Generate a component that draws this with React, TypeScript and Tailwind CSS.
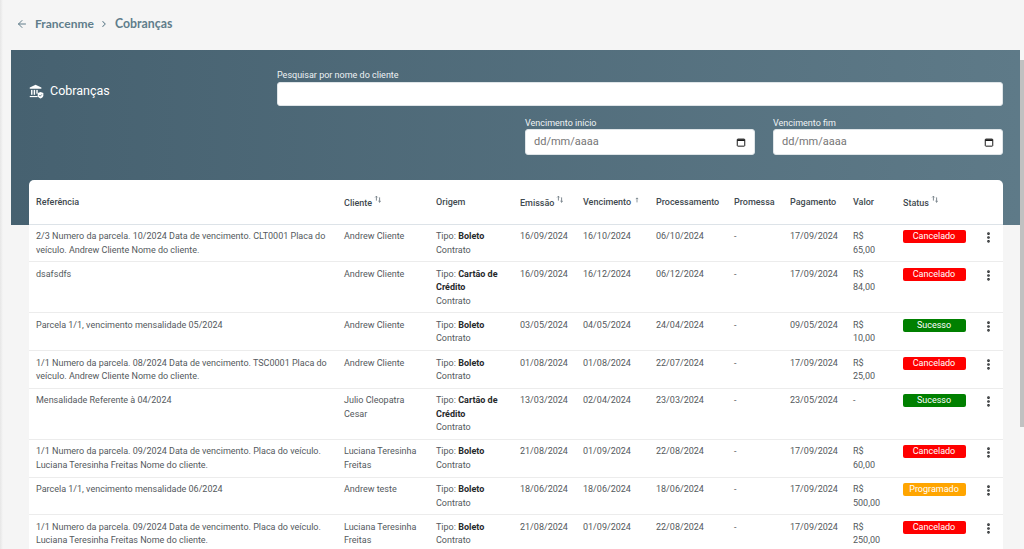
import React from 'react';
import { ArrowLeft, ChevronRight, MoreVertical } from 'lucide-react';

type Row = {
  ref: string;
  cliente: string;
  tipo: string;
  emissao: string;
  vencimento: string;
  processamento: string;
  pagamento: string;
  valor: string;
  status: 'Cancelado' | 'Sucesso' | 'Programado';
};

const rows: Row[] = [
  { ref: '2/3 Numero da parcela. 10/2024 Data de vencimento. CLT0001 Placa do veículo. Andrew Cliente Nome do cliente.', cliente: 'Andrew Cliente', tipo: 'Boleto', emissao: '16/09/2024', vencimento: '16/10/2024', processamento: '06/10/2024', pagamento: '17/09/2024', valor: 'R$ 65,00', status: 'Cancelado' },
  { ref: 'dsafsdfs', cliente: 'Andrew Cliente', tipo: 'Cartão de Crédito', emissao: '16/09/2024', vencimento: '16/12/2024', processamento: '06/12/2024', pagamento: '17/09/2024', valor: 'R$ 84,00', status: 'Cancelado' },
  { ref: 'Parcela 1/1, vencimento mensalidade 05/2024', cliente: 'Andrew Cliente', tipo: 'Boleto', emissao: '03/05/2024', vencimento: '04/05/2024', processamento: '24/04/2024', pagamento: '09/05/2024', valor: 'R$ 10,00', status: 'Sucesso' },
  { ref: '1/1 Numero da parcela. 08/2024 Data de vencimento. TSC0001 Placa do veículo. Andrew Cliente Nome do cliente.', cliente: 'Andrew Cliente', tipo: 'Boleto', emissao: '01/08/2024', vencimento: '01/08/2024', processamento: '22/07/2024', pagamento: '17/09/2024', valor: 'R$ 25,00', status: 'Cancelado' },
  { ref: 'Mensalidade Referente à 04/2024', cliente: 'Julio Cleopatra Cesar', tipo: 'Cartão de Crédito', emissao: '13/03/2024', vencimento: '02/04/2024', processamento: '23/03/2024', pagamento: '23/05/2024', valor: '-', status: 'Sucesso' },
  { ref: '1/1 Numero da parcela. 09/2024 Data de vencimento. Placa do veículo. Luciana Teresinha Freitas Nome do cliente.', cliente: 'Luciana Teresinha Freitas', tipo: 'Boleto', emissao: '21/08/2024', vencimento: '01/09/2024', processamento: '22/08/2024', pagamento: '17/09/2024', valor: 'R$ 60,00', status: 'Cancelado' },
  { ref: 'Parcela 1/1, vencimento mensalidade 06/2024', cliente: 'Andrew teste', tipo: 'Boleto', emissao: '18/06/2024', vencimento: '18/06/2024', processamento: '18/06/2024', pagamento: '17/09/2024', valor: 'R$ 500,00', status: 'Programado' },
  { ref: '1/1 Numero da parcela. 09/2024 Data de vencimento. Placa do veículo. Luciana Teresinha Freitas Nome do cliente.', cliente: 'Luciana Teresinha Freitas', tipo: 'Boleto', emissao: '21/08/2024', vencimento: '01/09/2024', processamento: '22/08/2024', pagamento: '17/09/2024', valor: 'R$ 250,00', status: 'Cancelado' },
];

function StatusBadge({ status }: { status: Row['status'] }) {
  const color =
    status === 'Cancelado' ? 'bg-[#ff0000]' : status === 'Sucesso' ? 'bg-[#008000]' : 'bg-[#ffa500]';
  return (
    <div className={`${color} w-[63px] h-[13px] rounded-[2px] text-white text-center text-[9px] leading-[13px] -ml-[0.5px]`}>
      {status}
    </div>
  );
}

function SortIcon() {
  return (
    <svg viewBox="0 0 10 10" className="inline-block w-[8px] h-[8px] ml-[2px] align-[3px] text-[#6f7b83]" fill="none" stroke="currentColor" strokeWidth="1.1">
      <path d="M3 7V1.5M1.5 3L3 1.5 4.5 3" />
      <path d="M7 3v6M5.5 7.5L7 9 8.5 7.5" />
    </svg>
  );
}

function UpIcon() {
  return (
    <svg viewBox="0 0 10 10" className="inline-block w-[6px] h-[6px] ml-[3px] align-[2px] text-[#6f7b83]" fill="none" stroke="currentColor" strokeWidth="1.3">
      <path d="M5 9V1.5M3 3.5L5 1.5 7 3.5" />
    </svg>
  );
}

function BankIcon() {
  return (
    <svg viewBox="0 0 16 16" className="w-[15px] h-[15px] shrink-0 text-white" fill="currentColor">
      <path d="M7 0.8 L13.2 3.8 V5 H0.8 V3.8 Z" />
      <rect x="2.2" y="6.3" width="1.5" height="5.2" />
      <rect x="5" y="6.3" width="1.5" height="5.2" />
      <rect x="7.8" y="6.3" width="1.5" height="4" />
      <rect x="0.8" y="12.8" width="8.4" height="1.2" />
      <path d="M12.3 8.6l3 1.1v2.2c0 1.8-1.3 2.9-3 3.5-1.7-.6-3-1.7-3-3.5V9.7z" />
      <path d="M10.9 12l1 1 1.8-1.9" fill="none" stroke="#466170" strokeWidth="0.9" />
    </svg>
  );
}

function DateField({ label }: { label: string }) {
  return (
    <div className="w-[230px]">
      <div className="text-[9px] leading-[12px] text-[#eef2f4]">{label}</div>
      <div className="h-[26px] bg-white rounded-[3px] border border-[#dfe5e8] pl-[8px] pr-[8px] flex items-center justify-between">
        <span className="text-[11px] text-[#757575]">dd/mm/aaaa</span>
        <svg viewBox="0 0 12 12" className="w-[10px] h-[10px] text-[#1a1a1a]" fill="none" stroke="currentColor">
          <rect x="1.5" y="2.5" width="9" height="8.5" rx="0.8" strokeWidth="1.2" />
          <path d="M1.5 3.8h9" strokeWidth="2" />
        </svg>
      </div>
    </div>
  );
}

const th = 'px-[7px] pt-[1px] text-left font-medium text-[9px] text-[#3f4a50] align-middle whitespace-nowrap';
const td = 'px-[7px] pt-[5.5px] pb-[4.2px] align-top';

export default function App() {
  return (
    <div className="h-screen overflow-hidden flex bg-[#f5f5f5] font-['Roboto',sans-serif]">
      <div className="flex-1 min-w-0 pl-[11px] relative">
        <div className="absolute left-0 top-0 bottom-0 w-[3px] bg-gradient-to-r from-[#e6e6e6] to-[#f5f5f5]" />

        {/* Breadcrumb */}
        <div className="h-[50px] flex items-center pl-[5px] pb-[2px] text-[#607d8b] font-['Lato',sans-serif] font-bold text-[12px]">
          <ArrowLeft className="w-[12px] h-[12px] mr-[7px]" strokeWidth={2} />
          <span className="w-[57px] whitespace-nowrap">Francenme</span>
          <ChevronRight className="w-[10px] h-[10px] mx-[6.5px]" strokeWidth={2.5} />
          <span className="text-[12.3px]">Cobranças</span>
        </div>

        {/* Filtros */}
        <div className="h-[175px] bg-gradient-to-r from-[#466170] to-[#5e7a88] pl-[18px] pr-[17px] pt-[19px]">
          <div className="flex">
            <div className="w-[248px] flex items-center gap-[6px] h-[37px] pt-[8px] text-white">
              <BankIcon />
              <span className="text-[12.5px]">Cobranças</span>
            </div>
            <div className="flex-1">
              <div className="text-[9px] leading-[13px] text-[#eef2f4]">Pesquisar por nome do cliente</div>
              <div className="h-[24px] bg-white rounded-[3px] border border-[#dfe5e8]" />
              <div className="flex justify-end gap-[18px] mt-[11px]">
                <DateField label="Vencimento início" />
                <DateField label="Vencimento fim" />
              </div>
            </div>
          </div>
        </div>

        {/* Tabela */}
        <div className="absolute left-[29px] top-[180px] w-[974px] bg-white rounded-t-[5px]">
          <table className="w-full table-fixed border-collapse text-[9px] leading-[13.5px] text-[#54595d]">
            <colgroup>
              <col className="w-[308px]" />
              <col className="w-[92px]" />
              <col className="w-[84px]" />
              <col className="w-[63px]" />
              <col className="w-[73px]" />
              <col className="w-[78px]" />
              <col className="w-[56px]" />
              <col className="w-[63px]" />
              <col className="w-[50px]" />
              <col className="w-[68px]" />
              <col className="w-[39px]" />
            </colgroup>
            <thead>
              <tr className="h-[44px] border-b border-[#dde3e8]">
                <th className={th}>Referência</th>
                <th className={th}>Cliente<SortIcon /></th>
                <th className={th}>Origem</th>
                <th className={th}>Emissão<SortIcon /></th>
                <th className={th}>Vencimento<UpIcon /></th>
                <th className={th}>Processamento</th>
                <th className={th}>Promessa</th>
                <th className={th}>Pagamento</th>
                <th className={th}>Valor</th>
                <th className={th}>Status<SortIcon /></th>
                <th className={th}></th>
              </tr>
            </thead>
            <tbody>
              {rows.map((row, index) => (
                <tr key={index} className="border-b border-[#ececec]">
                  <td className={td}>{row.ref}</td>
                  <td className={td}>{row.cliente}</td>
                  <td className={td}>
                    <div>Tipo: <b className="font-bold text-[#26292b]">{row.tipo}</b></div>
                    <div>Contrato</div>
                  </td>
                  <td className={td}>{row.emissao}</td>
                  <td className={td}>{row.vencimento}</td>
                  <td className={td}>{row.processamento}</td>
                  <td className={td}>-</td>
                  <td className={td}>{row.pagamento}</td>
                  <td className={td}><div className="w-[24px]">{row.valor}</div></td>
                  <td className={td}><StatusBadge status={row.status} /></td>
                  <td className={td}>
                    <MoreVertical className="w-[13px] h-[13px] ml-[11px] mt-[1px] text-[#26292b]" strokeWidth={3} />
                  </td>
                </tr>
              ))}
            </tbody>
          </table>
        </div>
      </div>

      {/* Barra de rolagem */}
      <div className="w-[4px] shrink-0 mt-[50px] pt-[10px] bg-[#f6f6f6]">
        <div className="h-[367px] bg-[#c1c1c1]" />
      </div>
    </div>
  );
}
